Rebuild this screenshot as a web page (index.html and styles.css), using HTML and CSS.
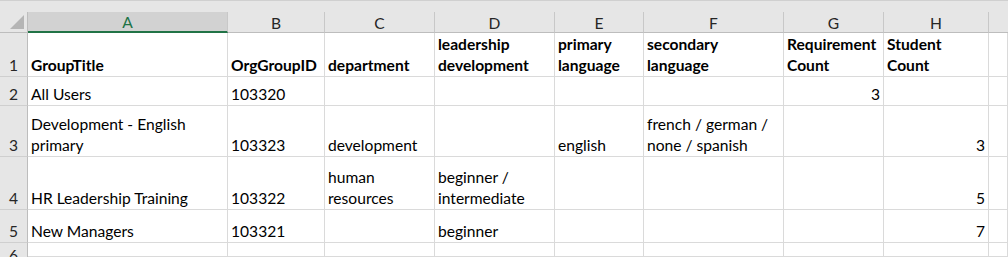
FILE: index.html
```html
<!DOCTYPE html>
<html>
<head>
<meta charset="utf-8">
<link rel="stylesheet" href="styles.css">
</head>
<body>
<div class="sheet">
  <div class="topbar"></div>

  <div class="corner"><span class="tri"></span></div>
  <div class="colhead sel">A</div>
  <div class="colhead">B</div>
  <div class="colhead">C</div>
  <div class="colhead">D</div>
  <div class="colhead">E</div>
  <div class="colhead">F</div>
  <div class="colhead">G</div>
  <div class="colhead">H</div>
  <div class="colhead last"></div>

  <div class="rowhead">1</div>
  <div class="cell b"><span>GroupTitle</span></div>
  <div class="cell b"><span>OrgGroupID</span></div>
  <div class="cell b"><span>department</span></div>
  <div class="cell b"><span>leadership development</span></div>
  <div class="cell b"><span>primary language</span></div>
  <div class="cell b"><span>secondary<br>language</span></div>
  <div class="cell b"><span>Requirement Count</span></div>
  <div class="cell b"><span>Student<br>Count</span></div>
  <div class="cell"></div>

  <div class="rowhead">2</div>
  <div class="cell"><span>All Users</span></div>
  <div class="cell"><span>103320</span></div>
  <div class="cell"></div>
  <div class="cell"></div>
  <div class="cell"></div>
  <div class="cell"></div>
  <div class="cell num"><span>3</span></div>
  <div class="cell"></div>
  <div class="cell"></div>

  <div class="rowhead">3</div>
  <div class="cell"><span>Development - English primary</span></div>
  <div class="cell"><span>103323</span></div>
  <div class="cell"><span>development</span></div>
  <div class="cell"></div>
  <div class="cell"><span>english</span></div>
  <div class="cell"><span>french / german / none / spanish</span></div>
  <div class="cell"></div>
  <div class="cell num"><span>3</span></div>
  <div class="cell"></div>

  <div class="rowhead">4</div>
  <div class="cell"><span>HR Leadership Training</span></div>
  <div class="cell"><span>103322</span></div>
  <div class="cell"><span>human resources</span></div>
  <div class="cell"><span>beginner / intermediate</span></div>
  <div class="cell"></div>
  <div class="cell"></div>
  <div class="cell"></div>
  <div class="cell num"><span>5</span></div>
  <div class="cell"></div>

  <div class="rowhead">5</div>
  <div class="cell"><span>New Managers</span></div>
  <div class="cell"><span>103321</span></div>
  <div class="cell"></div>
  <div class="cell"><span>beginner</span></div>
  <div class="cell"></div>
  <div class="cell"></div>
  <div class="cell"></div>
  <div class="cell num"><span>7</span></div>
  <div class="cell"></div>

  <div class="rowhead r6">6</div>
  <div class="cell"></div>
  <div class="cell"></div>
  <div class="cell"></div>
  <div class="cell"></div>
  <div class="cell"></div>
  <div class="cell"></div>
  <div class="cell"></div>
  <div class="cell"></div>
  <div class="cell"></div>
</div>
</body>
</html>
```

FILE: styles.css
```css
* { box-sizing: border-box; }
html, body { margin: 0; padding: 0; background: #fff; }
body {
  width: 1008px;
  height: 257px;
  overflow: hidden;
  font-family: Lato, "Liberation Sans", sans-serif;
  font-size: 15.6px;
  color: #000;
}
.sheet {
  display: grid;
  grid-template-columns: 28px 200px 97px 110px 120px 89px 140px 100px 105px 19px;
  grid-template-rows: 12px 21px 44px 29px 51px 53px 33px 14px;
  height: 257px;
  overflow: hidden;
}
.topbar {
  grid-column: 1 / -1;
  background: #e6e6e6;
  border-top: 1px solid #d0d0d0;
}
.corner {
  background: #e6e6e6;
  border-right: 1px solid #bdbdbd;
  border-bottom: 1px solid #bdbdbd;
  position: relative;
}
.tri {
  position: absolute;
  right: 3px;
  bottom: 3px;
  width: 0;
  height: 0;
  border-left: 14px solid transparent;
  border-bottom: 14px solid #b5b5b5;
}
.colhead {
  background: #e6e6e6;
  border-right: 1px solid #c8c8c8;
  border-bottom: 1px solid #bdbdbd;
  display: flex;
  align-items: center;
  justify-content: center;
  color: #262626;
  font-size: 15.6px;
  padding-top: 1px;
}
.colhead.sel {
  background: #d2d2d2;
  color: #217346;
  border-bottom: 2px solid #217346;
}
.colhead.last { border-right: none; }
.rowhead {
  background: #e6e6e6;
  border-right: 1px solid #bdbdbd;
  border-bottom: 1px solid #cfcfcf;
  display: flex;
  align-items: flex-end;
  justify-content: center;
  line-height: 21px;
  color: #262626;
}
.rowhead.r6 {
  align-items: flex-start;
  padding-top: 3px;
  line-height: 18px;
  border-bottom: none;
}
.cell {
  border-right: 1px solid #dadada;
  border-bottom: 1px solid #dadada;
  display: flex;
  align-items: flex-end;
  padding: 0 3px 0 3px;
  line-height: 21px;
  overflow: hidden;
}
.cell.b { font-weight: bold; }
.cell.num { justify-content: flex-end; }
```
